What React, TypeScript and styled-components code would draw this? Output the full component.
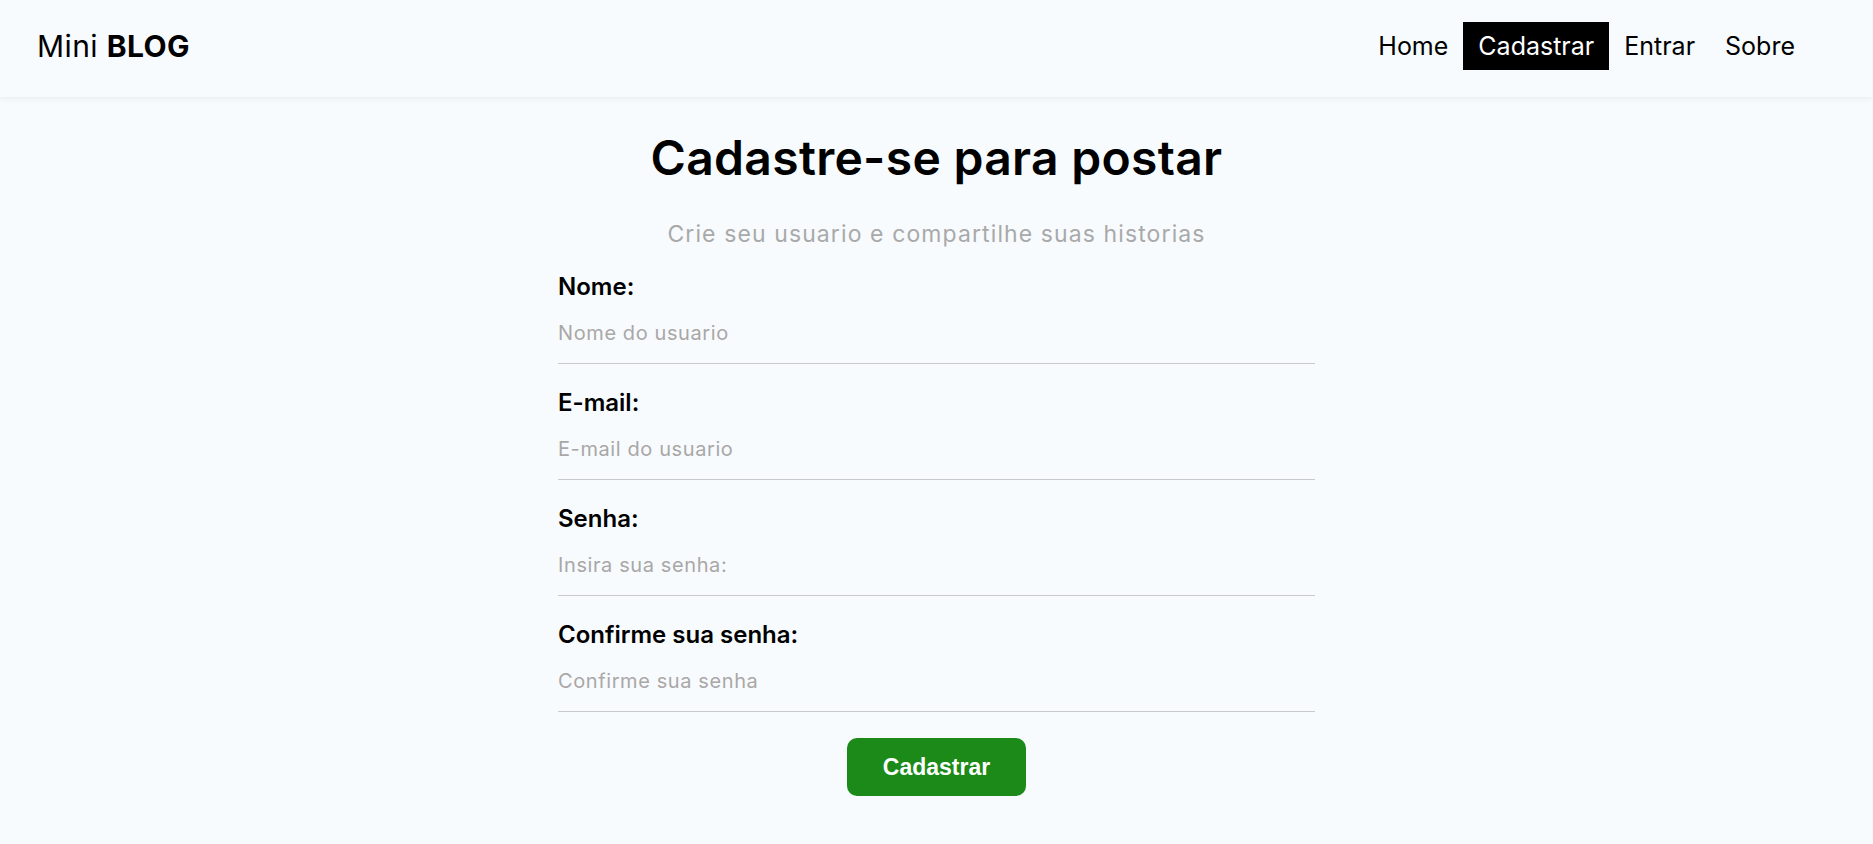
import React from "react";
import styled, { createGlobalStyle } from "styled-components";

const GlobalStyle = createGlobalStyle`
  * {
    box-sizing: border-box;
  }

  body {
    margin: 0;
    background-color: #f7fbfe;
    font-family: "Inter", "Open Sans", sans-serif;
    color: #000;
  }
`;

const Header = styled.header`
  height: 97px;
  display: flex;
  align-items: center;
  justify-content: space-between;
  padding: 0 63px 6px 37px;
  background-color: #f7fbfe;
  box-shadow: 0 2px 6px rgba(0, 0, 0, 0.06);
`;

const Brand = styled.a`
  font-size: 30px;
  letter-spacing: 0.4px;
  color: #000;
  text-decoration: none;

  strong {
    font-weight: 700;
  }
`;

const Nav = styled.nav`
  display: flex;
  align-items: center;
`;

const NavLink = styled.a<{ $active?: boolean }>`
  height: 48px;
  display: flex;
  align-items: center;
  padding: 0 15px;
  font-size: 25px;
  text-decoration: none;
  color: ${(p) => (p.$active ? "#fff" : "#000")};
  background-color: ${(p) => (p.$active ? "#000" : "transparent")};
`;

const Main = styled.main`
  display: flex;
  flex-direction: column;
  align-items: center;
  padding-top: 32px;
`;

const Title = styled.h1`
  margin: 0;
  font-size: 48px;
  font-weight: 600;
  line-height: 58px;
  letter-spacing: 0.3px;
`;

const Subtitle = styled.p`
  margin: 32px 0 0;
  font-size: 23px;
  line-height: 30px;
  letter-spacing: 1.1px;
  color: #a9a9a9;
`;

const Form = styled.form`
  width: 757px;
  display: flex;
  flex-direction: column;
  margin-top: 23px;
`;

const Field = styled.label`
  display: flex;
  flex-direction: column;
  margin-bottom: 24px;
`;

const FieldName = styled.span`
  font-size: 24px;
  font-weight: 600;
  line-height: 30px;
`;

const Input = styled.input`
  height: 62px;
  padding: 0;
  border: none;
  border-bottom: 1px solid #c9c9cc;
  background: transparent;
  font-family: inherit;
  font-size: 20px;
  letter-spacing: 0.6px;
  outline: none;

  &::placeholder {
    color: #aaa7a7;
  }
`;

const SubmitButton = styled.button`
  align-self: center;
  width: 179px;
  height: 58px;
  margin-top: 2px;
  border: none;
  border-radius: 10px;
  background-color: #1b8a19;
  color: #fff;
  font-family: "Liberation Sans", Arial, sans-serif;
  font-size: 23px;
  font-weight: 700;
  cursor: pointer;
`;

const fields = [
  { name: "Nome:", type: "text", placeholder: "Nome do usuario" },
  { name: "E-mail:", type: "email", placeholder: "E-mail do usuario" },
  { name: "Senha:", type: "password", placeholder: "Insira sua senha:" },
  { name: "Confirme sua senha:", type: "password", placeholder: "Confirme sua senha" },
];

const App = () => {
  return (
    <>
      <GlobalStyle />
      <Header>
        <Brand href="#">
          Mini <strong>BLOG</strong>
        </Brand>
        <Nav>
          <NavLink href="#">Home</NavLink>
          <NavLink href="#" $active>
            Cadastrar
          </NavLink>
          <NavLink href="#">Entrar</NavLink>
          <NavLink href="#">Sobre</NavLink>
        </Nav>
      </Header>
      <Main>
        <Title>Cadastre-se para postar</Title>
        <Subtitle>Crie seu usuario e compartilhe suas historias</Subtitle>
        <Form onSubmit={(e) => e.preventDefault()}>
          {fields.map((f) => (
            <Field key={f.name}>
              <FieldName>{f.name}</FieldName>
              <Input type={f.type} placeholder={f.placeholder} />
            </Field>
          ))}
          <SubmitButton type="submit">Cadastrar</SubmitButton>
        </Form>
      </Main>
    </>
  );
};

export default App;
